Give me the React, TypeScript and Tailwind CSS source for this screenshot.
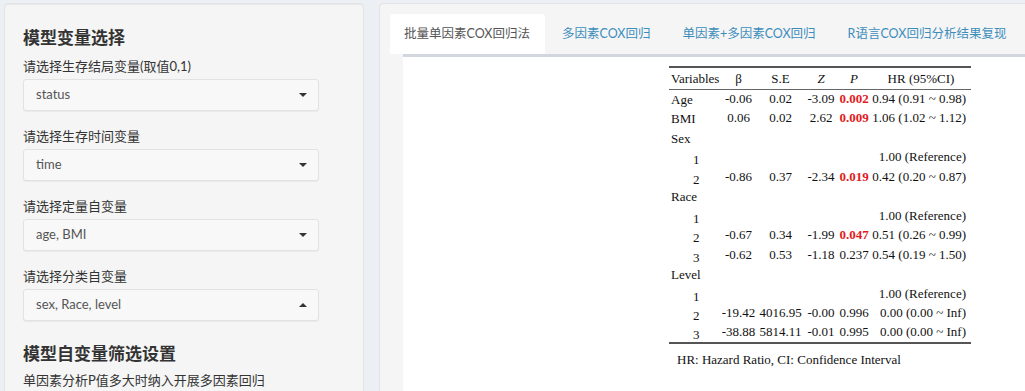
import React from 'react'

const ui = { fontFamily: 'Lato, "Noto Sans CJK SC", sans-serif' }
const serif = { fontFamily: '"Liberation Serif", "Times New Roman", serif' }

function Select({ value, open }: { value: string; open?: boolean }) {
  return (
    <div className="w-[296px] h-[32px] flex items-center justify-between pl-[12px] pr-[11px] bg-[#f8f8f8] border border-[#e2e2e2] rounded-[3px] shadow-[0_1px_1px_rgba(0,0,0,0.05)]">
      <span className="text-[13px] text-[#555]">{value}</span>
      {open ? (
        <span className="w-0 h-0 border-x-[4px] border-b-[4px] border-x-transparent border-b-[#333]" />
      ) : (
        <span className="w-0 h-0 border-x-[4px] border-t-[4px] border-x-transparent border-t-[#333]" />
      )}
    </div>
  )
}

function Field({ label, value, open }: { label: string; value: string; open?: boolean }) {
  return (
    <div className="mb-[15px]">
      <p className="text-[13px] leading-[20px] text-[#333] mb-[3px]">{label}</p>
      <Select value={value} open={open} />
    </div>
  )
}

type Row = {
  v: string
  sub?: boolean
  b?: string
  se?: string
  z?: string
  p?: string
  sig?: boolean
  hr?: string
}

const rows: Row[] = [
  { v: 'Age', b: '-0.06', se: '0.02', z: '-3.09', p: '0.002', sig: true, hr: '0.94 (0.91 ~ 0.98)' },
  { v: 'BMI', b: '0.06', se: '0.02', z: '2.62', p: '0.009', sig: true, hr: '1.06 (1.02 ~ 1.12)' },
  { v: 'Sex' },
  { v: '1', sub: true, hr: '1.00 (Reference)' },
  { v: '2', sub: true, b: '-0.86', se: '0.37', z: '-2.34', p: '0.019', sig: true, hr: '0.42 (0.20 ~ 0.87)' },
  { v: 'Race' },
  { v: '1', sub: true, hr: '1.00 (Reference)' },
  { v: '2', sub: true, b: '-0.67', se: '0.34', z: '-1.99', p: '0.047', sig: true, hr: '0.51 (0.26 ~ 0.99)' },
  { v: '3', sub: true, b: '-0.62', se: '0.53', z: '-1.18', p: '0.237', hr: '0.54 (0.19 ~ 1.50)' },
  { v: 'Level' },
  { v: '1', sub: true, hr: '1.00 (Reference)' },
  { v: '2', sub: true, b: '-19.42', se: '4016.95', z: '-0.00', p: '0.996', hr: '0.00 (0.00 ~ Inf)' },
  { v: '3', sub: true, b: '-38.88', se: '5814.11', z: '-0.01', p: '0.995', hr: '0.00 (0.00 ~ Inf)' },
]

function CoxTable() {
  return (
    <div className="ml-[266px] mt-[9px] w-[302px] text-[13px] text-[#111]" style={serif}>
      <table className="table-fixed w-[302px] border-collapse">
        <colgroup>
          <col className="w-[52px]" />
          <col className="w-[35px]" />
          <col className="w-[49px]" />
          <col className="w-[32px]" />
          <col className="w-[34px]" />
          <col className="w-[100px]" />
        </colgroup>
        <thead>
          <tr className="h-[22px] border-t-2 border-b border-t-[#555] border-b-[#666]">
            <th className="font-normal text-left pl-[2px] whitespace-nowrap">Variables</th>
            <th className="font-normal text-center">β</th>
            <th className="font-normal text-center">S.E</th>
            <th className="font-normal text-center italic">Z</th>
            <th className="font-normal text-center italic">P</th>
            <th className="font-normal text-center whitespace-nowrap">HR (95%CI)</th>
          </tr>
        </thead>
        <tbody className="border-b-2 border-b-[#555]">
          {rows.map((r, i) => (
            <tr key={i} className="h-[19.5px] leading-[16px]">
              <td className={r.sub ? 'pl-[24px]' : 'pl-[2px]'}>
                <span className={r.sub ? 'inline-block translate-y-[3px]' : 'inline-block translate-y-[1px]'}>{r.v}</span>
              </td>
              <td className="text-center whitespace-nowrap">{r.b}</td>
              <td className="text-center whitespace-nowrap">{r.se}</td>
              <td className="text-center whitespace-nowrap">{r.z}</td>
              <td className={`text-center whitespace-nowrap ${r.sig ? 'font-bold text-[#e31a1c]' : ''}`}>{r.p}</td>
              <td className="text-right pr-[5px] whitespace-nowrap">{r.hr}</td>
            </tr>
          ))}
        </tbody>
      </table>
      <p className="pl-[8px] mt-[6px] leading-[20px] whitespace-nowrap">HR: Hazard Ratio, CI: Confidence Interval</p>
    </div>
  )
}

const tabs = ['批量单因素COX回归法', '多因素COX回归', '单因素+多因素COX回归', 'R语言COX回归分析结果复现']

export default function App() {
  return (
    <div className="w-[1025px] h-[391px] overflow-hidden bg-[#ecf0f5] flex gap-[15px] pl-[4px] pt-[3px]" style={ui}>
      {/* sidebar */}
      <div className="w-[360px] shrink-0 h-[420px] bg-[#f5f5f5] border border-[#e3e3e3] rounded-[4px] shadow-[inset_0_1px_1px_rgba(0,0,0,0.05)] px-[18px] pt-[24px]">
        <h3 className="text-[17px] leading-[20px] font-bold text-[#333] mb-[8px]">模型变量选择</h3>
        <Field label="请选择生存结局变量(取值0,1)" value="status" />
        <Field label="请选择生存时间变量" value="time" />
        <Field label="请选择定量自变量" value="age, BMI" />
        <Field label="请选择分类自变量" value="sex, Race, level" open />
        <h3 className="text-[17px] leading-[20px] font-bold text-[#333] mt-[23px] mb-[6px]">模型自变量筛选设置</h3>
        <p className="text-[13px] leading-[20px] text-[#333]">单因素分析P值多大时纳入开展多因素回归</p>
      </div>

      {/* main panel */}
      <div className="w-[900px] shrink-0 h-[420px] bg-[#f5f5f5] border border-[#e3e3e3] rounded-[4px] pl-[10px] pt-[10px]">
        <ul className="flex h-[40px]">
          {tabs.map((t, i) => (
            <li
              key={t}
              className={`mr-[2px] h-[40px] flex items-center whitespace-nowrap text-[12.5px] rounded-t-[3px] ${
                i === 0 ? 'bg-white text-[#555] pl-[14px] pr-[15px]' : 'text-[#3c8dbc] px-[15px]'
              }`}
            >
              {t}
            </li>
          ))}
        </ul>
        <div className="ml-[13px] h-[360px] bg-white border-t-[3px] border-[#d2d6de]">
          <CoxTable />
        </div>
      </div>
    </div>
  )
}
